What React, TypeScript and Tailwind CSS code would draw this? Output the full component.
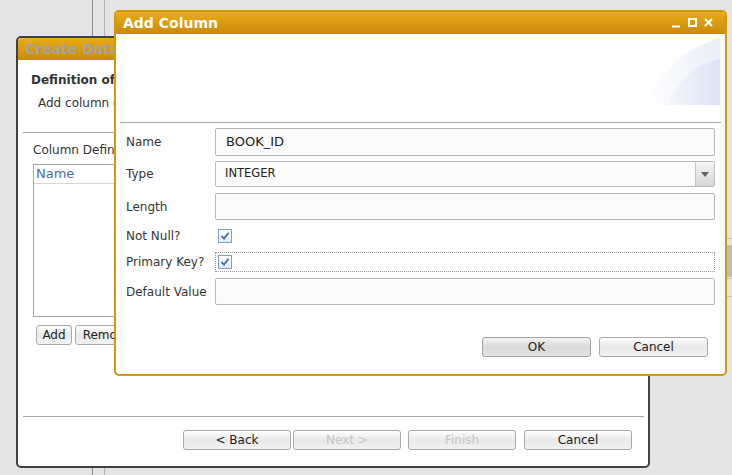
import React from "react";

const btn =
  "h-[20px] w-[108px] border border-[#a9a9a9] rounded-[3px] bg-gradient-to-b from-[#ffffff] via-[#e9e9e9] to-[#f2f2f2] text-[12px] leading-[18px] text-[#222] flex items-center justify-center";

function Check() {
  return (
    <div className="w-[14px] h-[14px] border border-[#7f9fd2] bg-gradient-to-b from-[#ffffff] to-[#e3ebf7] flex items-center justify-center">
      <svg width="10" height="10" viewBox="0 0 10 10">
        <path d="M1.5 5.2 L4 7.6 L8.6 1.8" fill="none" stroke="#3f6db3" strokeWidth="1.8" />
      </svg>
    </div>
  );
}

export default function App() {
  return (
    <div className="relative w-[732px] h-[475px] overflow-hidden bg-[#e4e4e4] font-['DejaVu_Sans',sans-serif]">
      {/* background application */}
      <div className="absolute inset-0 flex">
        <div className="w-[92px]" />
        <div className="w-[13px] border-l border-l-[#8e8e8e] border-r border-r-[#b3b3b3]" />
        <div className="flex-1" />
        <div className="w-[6px] flex flex-col pt-[238px]">
          <div className="h-[1px] bg-[#c4c4c4]" />
          <div className="h-[6px]" />
          <div className="h-[32px] bg-[#bdbdbd]" />
          <div className="h-[1px] mt-[1px] bg-[#c4c4c4]" />
          <div className="h-[17px]" />
          <div className="h-[1px] bg-[#c4c4c4]" />
        </div>
      </div>

      {/* Back dialog */}
      <div className="absolute left-[16px] top-[36px] w-[634px] h-[432px] border-2 border-[#414141] rounded-[5px] bg-white flex flex-col overflow-hidden">
        <div className="h-[22px] bg-gradient-to-b from-[#eaab15] to-[#c98b0b] pl-[7px] text-[14px] leading-[22px] font-bold text-[#a3a3a3] whitespace-nowrap">
          <div className="w-[89px] overflow-hidden">Create Database Table</div>
        </div>
        <div className="flex-1 flex flex-col">
          <div className="mt-[12px] ml-[13px] w-[83px] overflow-hidden whitespace-nowrap text-[12px] leading-[16px] font-bold text-[#333]">Definition of the table</div>
          <div className="mt-[7px] ml-[20px] w-[76px] overflow-hidden whitespace-nowrap text-[12px] leading-[16px] text-[#333]">Add column definitions</div>
          <div className="mt-[21px] ml-[5px] mr-[4px] border-t border-[#a8a8a8]" />
          <div className="mt-[9px] ml-[15px] w-[81px] overflow-hidden whitespace-nowrap text-[12px] leading-[16px] text-[#333]">Column Definitions</div>
          <div className="mt-[6px] ml-[15px] w-[590px] h-[153px] border border-[#a3a3a3]">
            <div className="h-[19px] border-b border-[#d6d6d6] pl-[2px] text-[13px] leading-[18px] text-[#4a6ca6]">Name</div>
          </div>
          <div className="mt-[8px] ml-[18px] flex gap-[3px]">
            <div className="h-[20px] w-[36px] border border-[#a9a9a9] rounded-[3px] bg-gradient-to-b from-[#ffffff] via-[#e9e9e9] to-[#f2f2f2] text-[12px] leading-[18px] text-[#222] flex items-center justify-center">Add</div>
            <div className="h-[20px] w-[64px] border border-[#a9a9a9] rounded-[3px] bg-gradient-to-b from-[#ffffff] via-[#e9e9e9] to-[#f2f2f2] text-[12px] leading-[18px] text-[#222] flex items-center justify-center">Remove</div>
          </div>
        </div>
        <div className="ml-[5px] mr-[4px] border-t border-[#a8a8a8]" />
        <div className="mt-[13px] mb-[16px] pr-[16px] flex justify-end">
          <div className={btn}>&lt; Back</div>
          <div className={btn + " ml-[2px] text-[#c4c4c4]"}>Next &gt;</div>
          <div className={btn + " ml-[7px] text-[#c4c4c4]"}>Finish</div>
          <div className={btn + " ml-[8px]"}>Cancel</div>
        </div>
      </div>

      {/* Front dialog */}
      <div className="absolute left-[114px] top-[10px] w-[613px] h-[366px] border-2 border-[#d3990d] rounded-[5px] bg-white flex flex-col overflow-hidden">
        <div className="h-[22px] bg-gradient-to-b from-[#ebab15] to-[#c88b0b] pl-[7px] pr-[12px] flex items-center justify-between">
          <span className="text-[14px] leading-[22px] font-bold text-white">Add Column</span>
          <svg width="41" height="10" viewBox="0 0 41 10">
            <path d="M0 8.5 H8" stroke="#fff" strokeWidth="2" />
            <rect x="17" y="1" width="7" height="7" fill="none" stroke="#fff" strokeWidth="2" />
            <path d="M33 1 L40 8 M40 1 L33 8" stroke="#fff" strokeWidth="2" />
          </svg>
        </div>
        <div className="h-[88px] flex justify-end pt-[4px] pr-[5px]">
          <svg width="74" height="67" viewBox="0 0 74 67">
            <defs>
              <linearGradient id="g1" x1="0" y1="0" x2="1" y2="0">
                <stop offset="0" stopColor="#ffffff" />
                <stop offset="1" stopColor="#e9eef9" />
              </linearGradient>
              <linearGradient id="g2" x1="0" y1="0" x2="1" y2="0">
                <stop offset="0" stopColor="#f3f6fc" />
                <stop offset="1" stopColor="#dbe3f5" />
              </linearGradient>
            </defs>
            <path d="M0 67 Q 22 14 74 0 L74 67 Z" fill="url(#g1)" />
            <path d="M22 67 Q 38 28 74 21 L74 67 Z" fill="url(#g2)" />
          </svg>
        </div>
        <div className="mx-[4px] border-t border-[#a6a6a6]" />
        <div className="flex flex-col pl-[10px] pr-[10px] text-[12px] text-[#363636]">
          <div className="mt-[5px] h-[28px] flex items-center">
            <div className="w-[89px]">Name</div>
            <div className="flex-1 h-full border border-[#b5b5b5] rounded-[2px] bg-[#fbfbfb] pl-[10px] flex items-center text-[13px] text-[#222]">BOOK_ID</div>
          </div>
          <div className="mt-[5px] h-[26px] flex items-center">
            <div className="w-[89px]">Type</div>
            <div className="flex-1 h-full border border-[#bdbdbd] rounded-[2px] bg-[#fbfbfb] flex">
              <div className="flex-1 pl-[9px] flex items-center text-[11.5px] text-[#222]">INTEGER</div>
              <div className="w-[19px] border-l border-[#c4c4c4] bg-gradient-to-b from-[#f6f6f6] to-[#d6d6d6] flex items-center justify-center">
                <svg width="8" height="5" viewBox="0 0 8 5">
                  <path d="M0 0 H8 L4 5 Z" fill="#606060" />
                </svg>
              </div>
            </div>
          </div>
          <div className="mt-[6px] h-[27px] flex items-center">
            <div className="w-[89px]">Length</div>
            <div className="flex-1 h-full border border-[#b5b5b5] rounded-[2px] bg-[#fbfbfb]" />
          </div>
          <div className="mt-[6px] h-[20px] flex items-center">
            <div className="w-[89px]">Not Null?</div>
            <div className="flex-1 h-full flex items-center pl-[3px]">
              <Check />
            </div>
          </div>
          <div className="mt-[6px] h-[20px] flex items-center">
            <div className="w-[89px] whitespace-nowrap">Primary Key?</div>
            <div className="flex-1 h-full flex items-center pl-[2px] border border-dotted border-[#9a9a9a]">
              <Check />
            </div>
          </div>
          <div className="mt-[6px] h-[27px] flex items-center">
            <div className="w-[89px] whitespace-nowrap">Default Value</div>
            <div className="flex-1 h-full border border-[#b5b5b5] rounded-[2px] bg-[#fbfbfb]" />
          </div>
        </div>
        <div className="mt-[32px] pr-[17px] flex justify-end gap-[8px]">
          <div className="h-[20px] w-[109px] border border-[#a3a3a3] rounded-[3px] bg-gradient-to-b from-[#f4f4f4] via-[#dadada] to-[#e2e2e2] text-[12px] leading-[18px] text-[#222] flex items-center justify-center">OK</div>
          <div className="h-[20px] w-[109px] border border-[#a9a9a9] rounded-[3px] bg-gradient-to-b from-[#ffffff] via-[#e9e9e9] to-[#f2f2f2] text-[12px] leading-[18px] text-[#222] flex items-center justify-center">Cancel</div>
        </div>
      </div>
    </div>
  );
}
